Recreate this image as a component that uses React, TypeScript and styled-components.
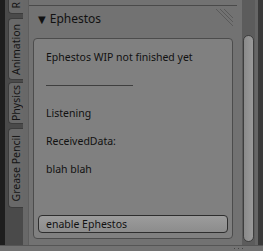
import styled, { createGlobalStyle } from "styled-components";

const Global = createGlobalStyle`
  html, body {
    margin: 0;
    padding: 0;
    background: #727272;
  }
  body {
    font-family: "Noto Sans", "DejaVu Sans", sans-serif;
  }
`;

const Frame = styled.div`
  width: 263px;
  height: 251px;
  display: flex;
  flex-direction: column;
  overflow: hidden;
  background: #727272;
`;

const Body = styled.div`
  flex: 1;
  display: flex;
  min-height: 0;
`;

const Edge = styled.div`
  width: 5px;
  background: #1e1e1e;
`;

const TabStrip = styled.div`
  width: 18px;
  background: #4a4a4a;
  display: flex;
  flex-direction: column;
  align-items: flex-end;
`;

const Tab = styled.div<{ $top: number; $h: number }>`
  width: 15px;
  height: ${(p) => p.$h}px;
  margin-top: ${(p) => p.$top}px;
  flex-shrink: 0;
  background: #696969;
  border: 1px solid #3c3c3c;
  border-right: none;
  border-radius: 4px 0 0 4px;
  box-sizing: border-box;
  display: flex;
  align-items: center;
  justify-content: center;
  overflow: hidden;
`;

const TabLabel = styled.span`
  writing-mode: vertical-rl;
  transform: rotate(180deg);
  font-size: 10.5px;
  color: #141414;
  white-space: nowrap;
`;

const Gutter = styled.div`
  width: 5px;
  background: #686868;
  border-right: 1px solid #5e5e5e;
`;

const Main = styled.div`
  flex: 1;
  display: flex;
  flex-direction: column;
  padding-top: 5px;
`;

const HeaderRow = styled.div`
  height: 26px;
  margin: 0 5px 7px 0;
  border-top: 1px solid #4a4a4a;
  display: flex;
  align-items: center;
  padding-left: 9px;
  box-sizing: border-box;
  position: relative;
`;

const Arrow = styled.span`
  font-size: 10px;
  color: #111;
  margin-right: 4px;
`;

const Title = styled.span`
  font-size: 12px;
  color: #111;
`;

const Grip = styled.svg`
  position: absolute;
  right: 3px;
  top: 2px;
`;

const Box = styled.div`
  width: 200px;
  height: 201px;
  margin-left: 4px;
  box-sizing: border-box;
  border: 1px solid #4c4c4c;
  border-radius: 4px;
  background: #808080;
  display: flex;
  flex-direction: column;
  padding: 4px 4px 5px 4px;
`;

const Line = styled.div`
  height: 28px;
  display: flex;
  align-items: center;
  padding-left: 8px;
  font-size: 10.5px;
  color: #111;
  white-space: nowrap;
`;

const Rule = styled.div`
  width: 87px;
  height: 1px;
  background: #2e2e2e;
  opacity: 0.8;
`;

const Button = styled.div`
  margin-top: auto;
  height: 18px;
  box-sizing: border-box;
  border: 1px solid #2e2e2e;
  border-radius: 4px;
  background: linear-gradient(#9c9c9c, #8c8c8c);
  display: flex;
  align-items: center;
  padding-left: 7px;
  font-size: 10.5px;
  color: #111;
`;

const ScrollColumn = styled.div`
  width: 21px;
  display: flex;
`;

const Track = styled.div`
  width: 13px;
  background: #5c5c5c;
  padding: 35px 1px 3px 1px;
  box-sizing: border-box;
  display: flex;
`;

const Thumb = styled.div`
  flex: 1;
  border: 1px solid #3e3e3e;
  border-radius: 6px;
  background: linear-gradient(90deg, #8a8a8a, #9a9a9a);
`;

const Shade = styled.div`
  flex: 1;
  background: #3a3a3a;
  border-left: 3px solid #666;
`;

const Footer = styled.div`
  height: 5px;
  border-top: 1px solid #555;
  background: #727272;
  display: flex;
  justify-content: flex-end;
  align-items: center;
  gap: 3px;
  padding-right: 20px;
`;

const Dot = styled.div`
  width: 1px;
  height: 1px;
  background: #444;
`;

export default function App() {
  return (
    <>
      <Global />
      <Frame>
        <Body>
          <Edge />
          <TabStrip>
            <Tab $top={-4} $h={18}>
              <TabLabel>R</TabLabel>
            </Tab>
            <Tab $top={4} $h={62}>
              <TabLabel>Animation</TabLabel>
            </Tab>
            <Tab $top={2} $h={42}>
              <TabLabel>Physics</TabLabel>
            </Tab>
            <Tab $top={4} $h={80}>
              <TabLabel>Grease Pencil</TabLabel>
            </Tab>
          </TabStrip>
          <Gutter />
          <Main>
            <HeaderRow>
              <Arrow>▼</Arrow>
              <Title>Ephestos</Title>
              <Grip width="20" height="20" viewBox="0 0 20 20">
                <g stroke="#5a5a5a" strokeWidth="1">
                  <line x1="2" y1="1" x2="19" y2="18" />
                  <line x1="6" y1="1" x2="19" y2="14" />
                  <line x1="10" y1="1" x2="19" y2="10" />
                </g>
              </Grip>
            </HeaderRow>
            <Box>
              <Line>Ephestos WIP not finished yet</Line>
              <Line>
                <Rule />
              </Line>
              <Line>Listening</Line>
              <Line>ReceivedData:</Line>
              <Line>blah blah</Line>
              <Button>enable Ephestos</Button>
            </Box>
          </Main>
          <ScrollColumn>
            <Track>
              <Thumb />
            </Track>
            <Shade />
          </ScrollColumn>
        </Body>
        <Footer>
          <Dot />
          <Dot />
          <Dot />
        </Footer>
      </Frame>
    </>
  );
}
